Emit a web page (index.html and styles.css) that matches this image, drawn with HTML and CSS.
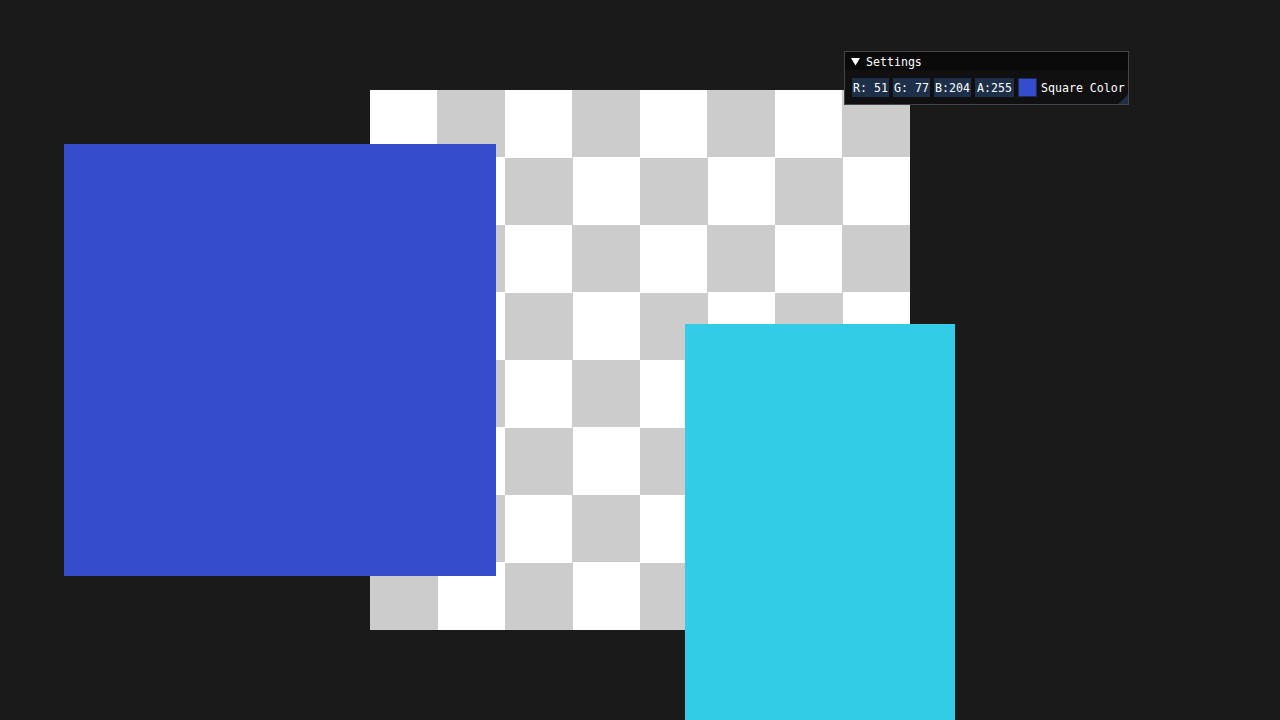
FILE: index.html
```html
<!DOCTYPE html>
<html>
<head>
<meta charset="utf-8">
<link rel="stylesheet" href="styles.css">
</head>
<body>
<div class="canvas">
  <div class="checker"></div>
  <div class="square blue"></div>
  <div class="square cyan"></div>
  <div class="window">
    <div class="titlebar">
      <svg class="arrow" width="9" height="8" viewBox="0 0 9 8"><polygon points="0,0 9,0 4.5,7.5" fill="#fff"/></svg>
      <span class="title">Settings</span>
    </div>
    <div class="content">
      <div class="drag w37">R: 51</div>
      <div class="drag w37">G: 77</div>
      <div class="drag w37">B:204</div>
      <div class="drag w39">A:255</div>
      <div class="swatch"></div>
      <span class="label">Square Color</span>
    </div>
    <div class="grip"></div>
  </div>
</div>
</body>
</html>
```
FILE: styles.css
```css
html, body {
  margin: 0;
  padding: 0;
  background: #1a1a1a;
  width: 1280px;
  height: 720px;
  overflow: hidden;
}
.canvas {
  position: relative;
  width: 1280px;
  height: 720px;
}
.checker {
  position: absolute;
  left: 370px;
  top: 90px;
  width: 540px;
  height: 540px;
  background: repeating-conic-gradient(#cccccc 0 25%, #ffffff 0 50%) 0 0 / 135px 135px;
}
.square {
  position: absolute;
}
.blue {
  left: 64px;
  top: 144px;
  width: 432px;
  height: 432px;
  background: #334dcc;
}
.cyan {
  left: 685px;
  top: 324px;
  width: 270px;
  height: 396px;
  background: #33cce6;
}
.window {
  position: absolute;
  left: 844px;
  top: 51px;
  width: 285px;
  height: 54px;
  box-sizing: border-box;
  border: 1px solid #44444d;
  background: #101010;
  font-family: "DejaVu Sans Mono", "Liberation Mono", monospace;
  font-size: 11.6px;
  color: #ffffff;
  overflow: hidden;
}
.titlebar {
  height: 18px;
  background: #0a0a0a;
  display: flex;
  align-items: center;
  padding-left: 6px;
}
.arrow {
  display: block;
  margin-right: 6px;
  margin-top: 1px;
  flex-shrink: 0;
}
.title {
  line-height: 18px;
  margin-top: 1px;
}
.content {
  display: flex;
  align-items: center;
  gap: 4px;
  padding: 8px 7px 7px 7px;
  height: 19px;
}
.content > * {
  flex-shrink: 0;
}
.drag {
  height: 19px;
  line-height: 20px;
  background: #1d2f49;
  text-align: center;
  white-space: pre;
}
.w37 { width: 37px; }
.w39 { width: 39px; }
.swatch {
  width: 19px;
  height: 19px;
  box-sizing: border-box;
  background: #334dcc;
  border: 1px solid #1c2a55;
}
.label {
  white-space: pre;
  line-height: 20px;
}
.grip {
  position: absolute;
  right: 0;
  bottom: 0;
  width: 10px;
  height: 10px;
  background: linear-gradient(to top left, #1f2f47 50%, transparent 50%);
}
```
